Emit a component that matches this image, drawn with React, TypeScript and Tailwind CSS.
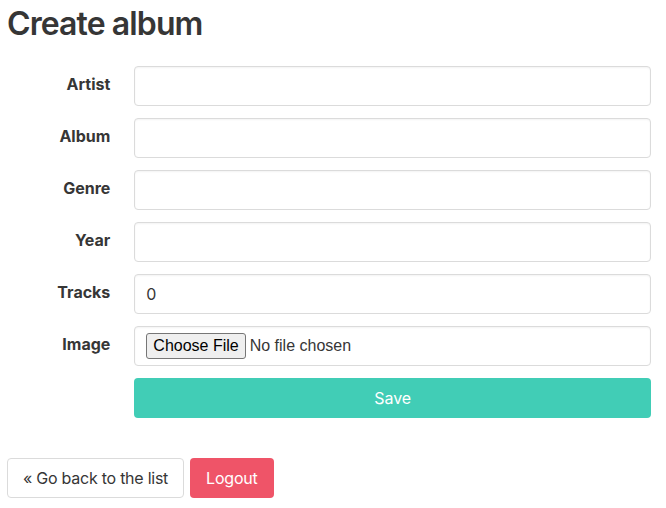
import React from "react";

const fields = ["Artist", "Album", "Genre", "Year", "Tracks"];

const Field = ({ label, children }: { label: string; children: React.ReactNode }) => (
  <div className="flex mb-3">
    <label className="basis-0 grow shrink-0 mr-6 pt-1.5 text-right font-bold text-base leading-6 text-[#363636]">
      {label}
    </label>
    <div className="basis-0 grow-[5] shrink">{children}</div>
  </div>
);

const App = () => {
  return (
    <div className="pl-[7px] pr-[15px] pt-[6px] text-[#4a4a4a] font-['Inter','Helvetica_Neue',Arial,sans-serif] bg-white min-h-[508px]">
      <h1 className="text-[32px] font-semibold leading-[36px] text-[#363636] tracking-[-0.9px] mb-[24px]">
        Create album
      </h1>

      <form onSubmit={(e) => e.preventDefault()}>
        {fields.map((f) => (
          <Field key={f} label={f}>
            <input
              type="text"
              defaultValue={f === "Tracks" ? "0" : ""}
              className="w-full h-10 px-[11px] text-base text-[#363636] bg-white border border-[#dbdbdb] rounded shadow-[inset_0_1px_2px_rgba(10,10,10,0.05)] outline-none"
            />
          </Field>
        ))}

        <Field label="Image">
          <div className="w-full h-10 px-[11px] flex items-center bg-white border border-[#dbdbdb] rounded shadow-[inset_0_1px_2px_rgba(10,10,10,0.05)]">
            <input
              type="file"
              className="text-base text-[#363636] font-['Liberation_Sans',Arial,sans-serif] file:text-base file:font-['Liberation_Sans',Arial,sans-serif] file:px-[6px] file:py-0 file:mr-1 file:bg-[#efefef] file:border file:border-[#767676] file:rounded-[3px] file:text-black"
            />
          </div>
        </Field>

        <div className="flex">
          <div className="basis-0 grow shrink-0 mr-6" />
          <div className="basis-0 grow-[5] shrink">
            <button
              type="submit"
              className="w-full h-10 rounded bg-[#41cdb6] text-white text-base"
            >
              Save
            </button>
          </div>
        </div>
      </form>

      <div className="flex gap-[6px] mt-10">
        <button className="h-10 px-[15px] border border-[#dbdbdb] rounded bg-white text-[#363636] text-base tracking-[-0.25px]">
          « Go back to the list
        </button>
        <button className="h-10 px-4 rounded bg-[#ef5468] text-white text-base tracking-[-0.2px]">
          Logout
        </button>
      </div>
    </div>
  );
};

export default App;
